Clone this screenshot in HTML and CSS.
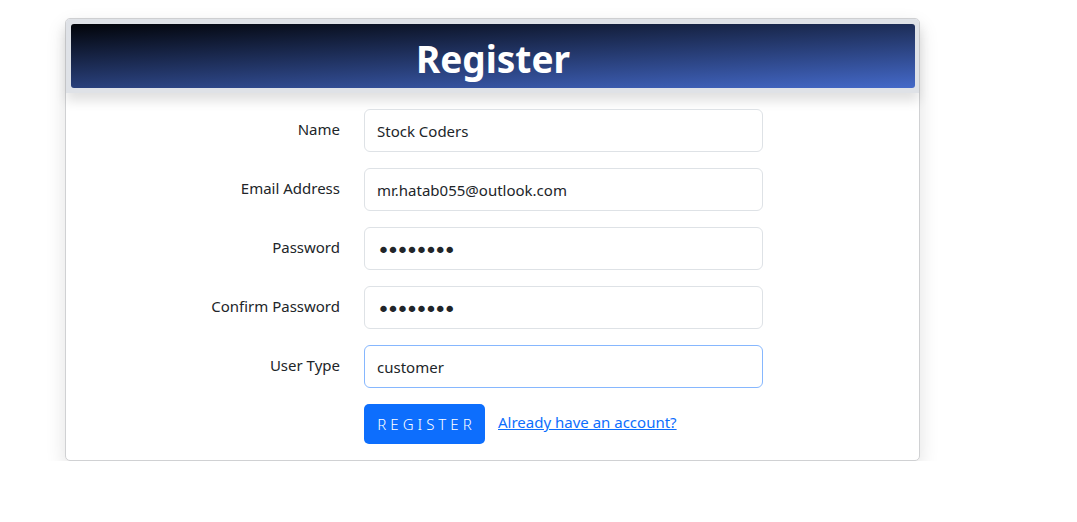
FILE: index.html
```html
<!DOCTYPE html>
<html lang="en">
<head>
<meta charset="utf-8">
<title>Register</title>
<link rel="stylesheet" href="styles.css">
</head>
<body>
<div class="card">
  <div class="card-header">
    <h1 class="title">Register</h1>
  </div>
  <form class="card-body">
    <label class="label" for="name">Name</label>
    <input class="field" id="name" type="text" value="Stock Coders">
    <label class="label" for="email">Email Address</label>
    <input class="field" id="email" type="text" value="mr.hatab055@outlook.com">
    <label class="label" for="pw">Password</label>
    <input class="field pw" id="pw" type="password" value="12345678">
    <label class="label" for="pw2">Confirm Password</label>
    <input class="field pw" id="pw2" type="password" value="12345678">
    <label class="label" for="type">User Type</label>
    <input class="field focus" id="type" type="text" value="customer">
    <div class="actions">
      <button class="btn" type="button">REGISTER</button>
      <a class="link" href="#">Already have an account?</a>
    </div>
  </form>
</div>
</body>
</html>
```
FILE: styles.css
```css
* { box-sizing: border-box; }
body {
  margin: 0;
  background: #fff;
  font-family: "Noto Sans", "Open Sans", sans-serif;
  color: #212529;
}
.card {
  margin: 18px 0 0 65px;
  width: 855px;
  border: 1px solid #d0d1d3;
  border-radius: 5px;
  background: #fff;
  box-shadow: 0 8px 20px rgba(0, 0, 0, 0.12);
}
.card-header {
  padding: 5px 4px 5px 5px;
  background: #dfe2e7;
  border-radius: 4px 4px 0 0;
  box-shadow: 0 8px 12px rgba(0, 0, 0, 0.12);
}
.title {
  margin: 0;
  height: 64px;
  line-height: 64px;
  padding-top: 3px;
  border-radius: 3px;
  background: linear-gradient(177deg, #020409 0%, #4469c9 100%);
  color: #fff;
  text-align: center;
  font-size: 37px;
  font-weight: 700;
}
.card-body {
  display: grid;
  grid-template-columns: 274px 399px;
  column-gap: 24px;
  row-gap: 16px;
  align-items: center;
  padding: 16px 0 16px 0;
}
.label {
  text-align: right;
  font-size: 15px;
  padding-bottom: 4px;
}
.field {
  height: 43px;
  width: 399px;
  border: 1px solid #dee2e6;
  border-radius: 6px;
  padding: 0 12px;
  font-family: inherit;
  font-size: 15px;
  color: #212529;
  background: #fff;
  outline: none;
}
.field.pw {
  font-family: "DejaVu Sans", sans-serif;
  font-size: 22px;
  padding-top: 3px;
  letter-spacing: -3.5px;
}
.field.focus {
  border-color: #86b7fe;
}
.actions {
  grid-column: 2;
  display: flex;
  align-items: center;
  gap: 13px;
}
.btn {
  height: 40px;
  width: 121px;
  border: none;
  border-radius: 5px;
  background: #0d6efd;
  color: #fff;
  font-family: inherit;
  font-size: 15px;
  font-weight: 300;
  letter-spacing: 4px;
  padding: 0 0 0 4px;
}
.link {
  color: #0d6efd;
  font-size: 15px;
  text-decoration: underline;
  padding-bottom: 4px;
}
```
